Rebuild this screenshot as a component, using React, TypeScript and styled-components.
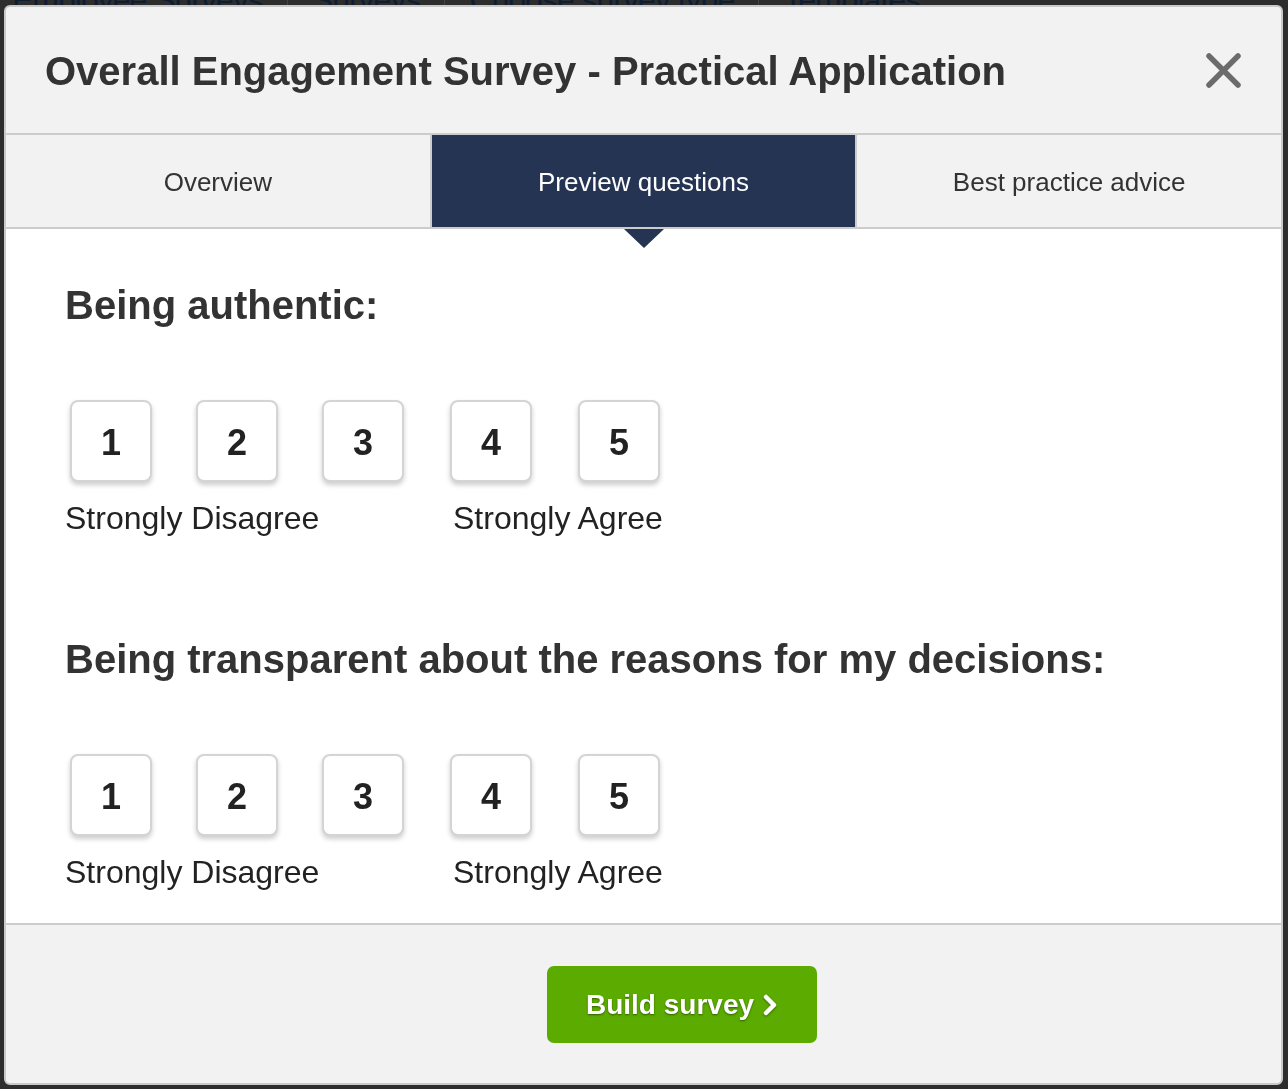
import React from "react"
import styled, { createGlobalStyle } from "styled-components"

const GlobalStyle = createGlobalStyle`
  html, body {
    margin: 0;
    padding: 0;
    background: #2d2d2d;
    font-family: "Liberation Sans", Arial, Helvetica, sans-serif;
    overflow: hidden;
  }
  * {
    box-sizing: border-box;
  }
`

const questions = ["Being authentic:", "Being transparent about the reasons for my decisions:"]
const tabs = ["Overview", "Preview questions", "Best practice advice"]
const crumbs = ["Employee Surveys", "Surveys", "Choose survey type", "Templates"]

export default function App() {
  return (
    <>
      <GlobalStyle />
      <Page>
        <Breadcrumbs>
          {crumbs.map((c, i) => (
            <Crumb key={c} first={i === 0}>
              {c}
            </Crumb>
          ))}
        </Breadcrumbs>
      </Page>

      <Modal>
        <Header>
          <Title>Overall Engagement Survey - Practical Application</Title>
          <CloseButton aria-label="Close">
            <svg width="35" height="35" viewBox="0 0 35 35">
              <path
                d="M3 3 L32 32 M32 3 L3 32"
                stroke="#6b6b6b"
                strokeWidth="5.5"
                strokeLinecap="round"
              />
            </svg>
          </CloseButton>
        </Header>

        <Tabs>
          {tabs.map((t, i) => (
            <Tab key={t} active={i === 1}>
              {t}
            </Tab>
          ))}
        </Tabs>

        <Body>
          {questions.map(q => (
            <Question key={q}>
              <QuestionTitle>{q}</QuestionTitle>
              <Scale>
                {[1, 2, 3, 4, 5].map(n => (
                  <ScaleOption key={n} wide={n > 3}>
                    {n}
                  </ScaleOption>
                ))}
              </Scale>
              <ScaleLabels>
                <ScaleLabel width={388}>Strongly Disagree</ScaleLabel>
                <ScaleLabel>Strongly Agree</ScaleLabel>
              </ScaleLabels>
            </Question>
          ))}
        </Body>

        <Footer>
          <BuildButton>
            Build survey
            <svg width="16" height="24" viewBox="0 0 16 24">
              <path
                d="M4 4 L12 12 L4 20"
                fill="none"
                stroke="#fff"
                strokeWidth="4.5"
                strokeLinejoin="round"
                strokeLinecap="round"
              />
            </svg>
          </BuildButton>
        </Footer>
      </Modal>
    </>
  )
}

const Page = styled.div`
  height: 100vh;
  background: #2d2d2d;
`

const Breadcrumbs = styled.div`
  display: flex;
  align-items: flex-end;
  padding: 0 0 0 12px;
  height: 12px;
  overflow: hidden;
`

const Crumb = styled.div<{ first?: boolean }>`
  font-size: 32px;
  line-height: 32px;
  letter-spacing: -1px;
  color: #0f1d33;
  padding: 0 24px;
  margin-bottom: -4px;
  border-left: ${props => (props.first ? "none" : "1px solid #444")};
  ${props => props.first && "padding-left: 0;"}
`

const Modal = styled.div`
  position: fixed;
  top: 5px;
  left: 4px;
  width: 1279px;
  height: 1080px;
  border: 2px solid #c9c9c9;
  border-radius: 6px;
  background: #f2f2f2;
  display: flex;
  flex-direction: column;
  overflow: hidden;
`

const Header = styled.div`
  height: 128px;
  flex-shrink: 0;
  display: flex;
  align-items: center;
  justify-content: space-between;
  padding: 2px 40px 0 39px;
  border-bottom: 2px solid #cccccc;
`

const Title = styled.h1`
  margin: 0;
  font-size: 40px;
  font-weight: bold;
  color: #333333;
  line-height: 1;
`

const CloseButton = styled.button`
  border: none;
  background: none;
  padding: 0;
  margin-top: -2px;
  width: 35px;
  height: 35px;
  display: flex;
  cursor: pointer;
`

const Tabs = styled.div`
  display: flex;
  height: 94px;
  flex-shrink: 0;
  border-bottom: 2px solid #cccccc;
`

const Tab = styled.div<{ active?: boolean }>`
  flex: 1;
  position: relative;
  display: flex;
  align-items: center;
  justify-content: center;
  padding-top: 2px;
  font-size: 26px;
  color: ${props => (props.active ? "#ffffff" : "#333333")};
  background: ${props => (props.active ? "#253452" : "#f2f2f2")};
  ${props =>
    props.active &&
    `
    border-left: 2px solid #cccccc;
    border-right: 2px solid #cccccc;
    &::after {
      content: "";
      position: absolute;
      left: 50%;
      bottom: -21px;
      margin-left: -20px;
      border-left: 20px solid transparent;
      border-right: 20px solid transparent;
      border-top: 19px solid #253452;
      z-index: 2;
    }
  `};
`

const Body = styled.div`
  flex: 1;
  background: #ffffff;
  padding: 52px 0 0 59px;
  display: flex;
  flex-direction: column;
  gap: 98px;
`

const Question = styled.div`
  display: flex;
  flex-direction: column;
`

const QuestionTitle = styled.h2`
  margin: 0;
  font-size: 40px;
  font-weight: bold;
  color: #333333;
  line-height: 48px;
`

const Scale = styled.div`
  display: flex;
  margin-top: 71px;
  padding-left: 5px;
  gap: 44px;
`

const ScaleOption = styled.div<{ wide?: boolean }>`
  width: 82px;
  height: 82px;
  display: flex;
  align-items: center;
  justify-content: center;
  border: 2px solid #d4d4d4;
  border-radius: 8px;
  box-shadow: 0 3px 5px rgba(0, 0, 0, 0.2);
  background: #ffffff;
  font-size: 36px;
  font-weight: bold;
  color: #222222;
  padding-top: 3px;
  ${props => props.wide && "margin-left: 2px;"}
`

const ScaleLabels = styled.div`
  display: flex;
  margin-top: 18px;
`

const ScaleLabel = styled.div<{ width?: number }>`
  font-size: 32px;
  line-height: 37px;
  color: #222222;
  ${props => props.width && `width: ${props.width}px;`}
`

const Footer = styled.div`
  height: 160px;
  flex-shrink: 0;
  border-top: 2px solid #cccccc;
  display: flex;
  align-items: center;
  justify-content: center;
  padding-left: 77px;
`

const BuildButton = styled.button`
  width: 270px;
  height: 77px;
  border: none;
  border-radius: 7px;
  background: #5bab00;
  color: #ffffff;
  font-family: "Liberation Sans", Arial, Helvetica, sans-serif;
  font-size: 28px;
  font-weight: bold;
  text-shadow: 0 1px 2px rgba(0, 0, 0, 0.45);
  display: flex;
  align-items: center;
  justify-content: center;
  gap: 8px;
  padding: 2px 0 0 0;
  cursor: pointer;
  svg {
    filter: drop-shadow(0 1px 1px rgba(0, 0, 0, 0.4));
  }
`
